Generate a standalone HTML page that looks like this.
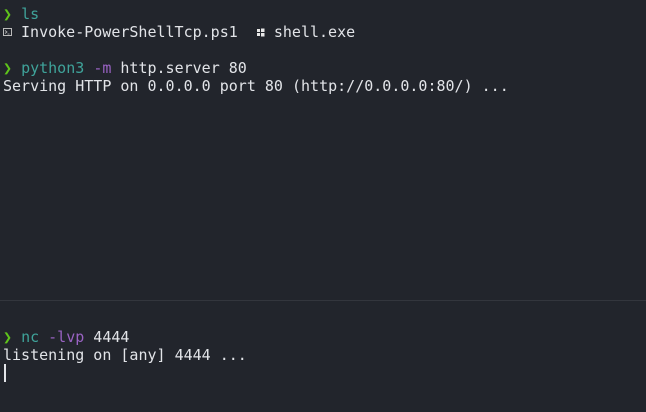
<!DOCTYPE html>
<html><head><style>
html,body{margin:0;padding:0;background:#22252c;width:646px;height:412px;overflow:hidden}
.t{position:absolute;left:3px;font-family:"DejaVu Sans Mono","Liberation Mono",monospace;font-size:15px;line-height:18px;color:#e2e4e8;white-space:pre}
.g{color:#5fc41b;font-weight:bold}
.c{color:#3fa39a}
.p{color:#9a63c4}
.sep{position:absolute;left:0;top:300px;width:646px;height:1px;background:#33363d}
.cur{position:absolute;left:4px;top:364px;width:2px;height:18px;background:#e2e4e8}
.ic{display:inline-block;width:9px;height:18px;vertical-align:top;position:relative}
</style></head><body>
<div class="t" style="top:5px"><span class="g">❯</span> <span class="c">ls</span>
<span class="ic"><svg width="9" height="18" style="position:absolute;left:0;top:0"><rect x="0.5" y="5.5" width="8" height="7" fill="none" stroke="#bbb"/><path d="M2 7.5l2 1.5-2 1.5M4.5 11h2" stroke="#bbb" fill="none" stroke-width="0.8"/></svg></span> Invoke-PowerShellTcp.ps1  <span class="ic"><svg width="9" height="18" style="position:absolute;left:0;top:0"><path d="M1 6h3v3H1zM5 5.5h3.5v3.5H5zM1 10h3v3H1zM5 10h3.5v3.5H5z" fill="#e8e8e8"/></svg></span> shell.exe

<span class="g">❯</span> <span class="c">python3</span> <span class="p">-m</span> http.server 80
Serving HTTP on 0.0.0.0 port 80 (http://0.0.0.0:80/) ...</div>
<div class="sep"></div>
<div class="t" style="top:328px"><span class="g">❯</span> <span class="c">nc</span> <span class="p">-lvp</span> 4444
listening on [any] 4444 ...</div>
<div class="cur"></div>
</body></html>
